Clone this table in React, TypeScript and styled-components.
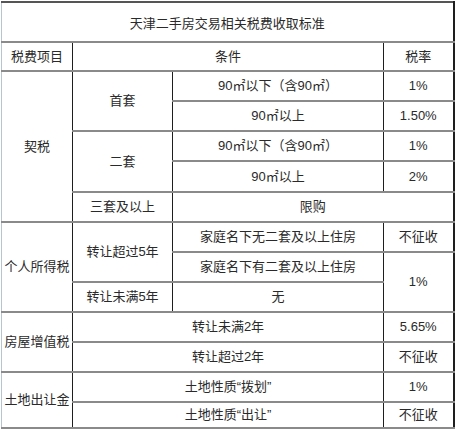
import styled, { createGlobalStyle } from 'styled-components';

const GlobalStyle = createGlobalStyle`
  html, body {
    margin: 0;
    padding: 0;
    background: #fff;
  }
  body {
    font-family: "Liberation Sans", "Noto Sans CJK SC", sans-serif;
    color: #2a2a2a;
  }
`;

const Page = styled.div`
  padding: 1px 0 0 1px;
`;

const Sheet = styled.table`
  border-collapse: collapse;
  table-layout: fixed;
  width: 452px;
  font-size: 13px;
  border-left: 1px solid #b8c4d2;
  border-right: 2px solid #1e1e1e;
  border-top: 2px solid #555;
  border-bottom: 2px solid #1e1e1e;
`;

const Row = styled.tr<{ $h: number }>`
  height: ${(p) => p.$h}px;
`;

const Cell = styled.td<{ $first?: boolean }>`
  padding: 0;
  text-align: center;
  vertical-align: middle;
  line-height: 16px;
  white-space: nowrap;
  border-top: 2px solid #8a8a8a;
  border-bottom: 2px solid #8a8a8a;
  border-left: ${(p) => (p.$first ? '1px solid #b8c4d2' : '1px solid #1e1e1e')};
  border-right: 1px solid #1e1e1e;
`;

const TitleCell = styled.td`
  padding: 0;
  text-align: center;
  font-size: 13px;
  border-bottom: 2px solid #8a8a8a;
`;

const App = () => {
  return (
    <>
      <GlobalStyle />
      <Page>
        <Sheet>
          <colgroup>
            <col style={{ width: 71 }} />
            <col style={{ width: 100 }} />
            <col style={{ width: 211 }} />
            <col style={{ width: 70 }} />
          </colgroup>
          <tbody>
            <Row $h={40}>
              <TitleCell colSpan={4}>天津二手房交易相关税费收取标准</TitleCell>
            </Row>
            <Row $h={29}>
              <Cell $first>税费项目</Cell>
              <Cell colSpan={2}>条件</Cell>
              <Cell>税率</Cell>
            </Row>

            {/* 契税 */}
            <Row $h={30}>
              <Cell $first rowSpan={5}>契税</Cell>
              <Cell rowSpan={2}>首套</Cell>
              <Cell>90㎡以下（含90㎡）</Cell>
              <Cell>1%</Cell>
            </Row>
            <Row $h={30}>
              <Cell>90㎡以上</Cell>
              <Cell>1.50%</Cell>
            </Row>
            <Row $h={30}>
              <Cell rowSpan={2}>二套</Cell>
              <Cell>90㎡以下（含90㎡）</Cell>
              <Cell>1%</Cell>
            </Row>
            <Row $h={31}>
              <Cell>90㎡以上</Cell>
              <Cell>2%</Cell>
            </Row>
            <Row $h={30}>
              <Cell>三套及以上</Cell>
              <Cell colSpan={2}>限购</Cell>
            </Row>

            {/* 个人所得税 */}
            <Row $h={30}>
              <Cell $first rowSpan={3}>个人所得税</Cell>
              <Cell rowSpan={2}>转让超过5年</Cell>
              <Cell>家庭名下无二套及以上住房</Cell>
              <Cell>不征收</Cell>
            </Row>
            <Row $h={30}>
              <Cell>家庭名下有二套及以上住房</Cell>
              <Cell rowSpan={2}>1%</Cell>
            </Row>
            <Row $h={30}>
              <Cell>转让未满5年</Cell>
              <Cell>无</Cell>
            </Row>

            {/* 房屋增值税 */}
            <Row $h={30}>
              <Cell $first rowSpan={2}>房屋增值税</Cell>
              <Cell colSpan={2}>转让未满2年</Cell>
              <Cell>5.65%</Cell>
            </Row>
            <Row $h={30}>
              <Cell colSpan={2}>转让超过2年</Cell>
              <Cell>不征收</Cell>
            </Row>

            {/* 土地出让金 */}
            <Row $h={30}>
              <Cell $first rowSpan={2}>土地出让金</Cell>
              <Cell colSpan={2}>土地性质“拨划”</Cell>
              <Cell>1%</Cell>
            </Row>
            <Row $h={26}>
              <Cell colSpan={2}>土地性质“出让”</Cell>
              <Cell>不征收</Cell>
            </Row>
          </tbody>
        </Sheet>
      </Page>
    </>
  );
};

export default App;
